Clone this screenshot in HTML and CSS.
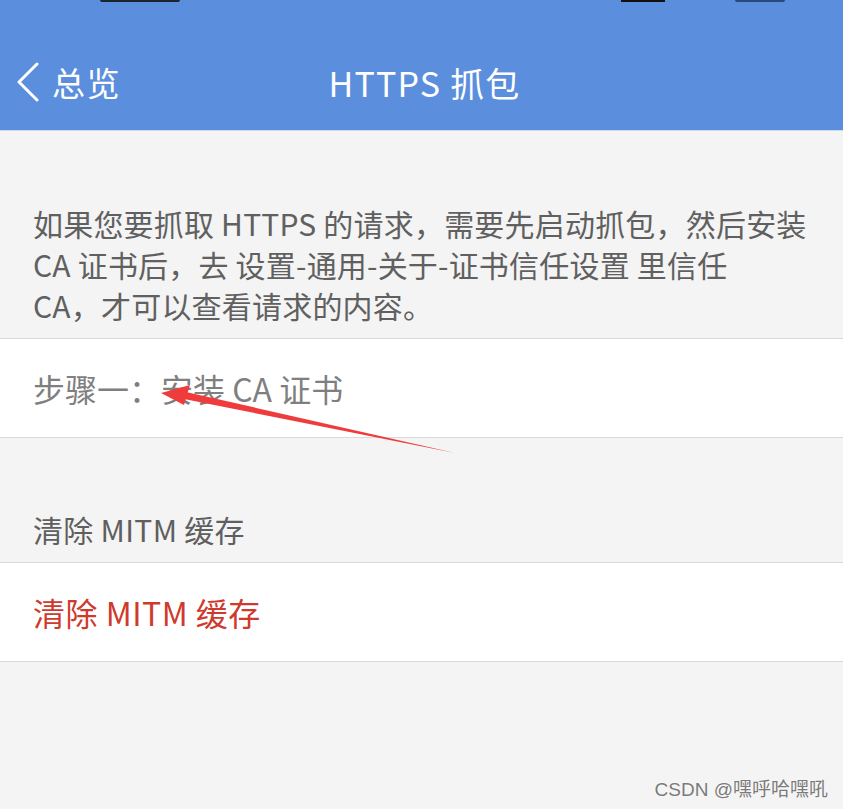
FILE: index.html
```html
<!DOCTYPE html>
<html lang="zh">
<head>
<meta charset="utf-8">
<title>HTTPS 抓包</title>
<link rel="stylesheet" href="styles.css">
</head>
<body>
<div class="screen">
  <header class="nav">
    <div class="status">
      <span class="time"></span>
      <span class="status-right">
        <span class="signal"></span>
        <span class="battery"></span>
      </span>
    </div>
    <div class="nav-row">
      <div class="back">
        <svg class="chev" width="24" height="40" viewBox="0 0 24 40"><polyline points="21,2 3,20 21,38" fill="none" stroke="#fff" stroke-width="3" stroke-linecap="round" stroke-linejoin="round"/></svg>
        <span>总览</span>
      </div>
      <div class="title">HTTPS 抓包</div>
      <div></div>
    </div>
  </header>

  <p class="intro">如果您要抓取 HTTPS 的请求，需要先启动抓包，然后安装<br>CA 证书后，去 设置-通用-关于-证书信任设置 里信任<br>CA，才可以查看请求的内容。</p>

  <div class="cell step">步骤一：安装 CA 证书</div>

  <div class="section-head">清除 MITM 缓存</div>
  <div class="cell danger">清除 MITM 缓存</div>

  <svg class="arrow" width="843" height="809" viewBox="0 0 843 809">
    <polygon points="455,453 186,392 184,399" fill="#ef3b3b"/>
    <polygon points="161,393 190,385 184,405" fill="#ef3b3b"/>
  </svg>

  <div class="watermark">CSDN @嘿呼哈嘿吼</div>
</div>
</body>
</html>
```
FILE: styles.css
```css
html, body {
  margin: 0;
  padding: 0;
}
body {
  background: #f4f4f4;
  font-family: "Noto Sans CJK SC", "Noto Sans", sans-serif;
}
.screen {
  position: relative;
  width: 843px;
  height: 809px;
  overflow: hidden;
  background: #f4f4f4;
}
.nav {
  height: 130px;
  background: #5b8edc;
  border-bottom: 1px solid #c9d9ee;
  box-sizing: content-box;
}
.status {
  height: 48px;
  display: flex;
  justify-content: space-between;
  align-items: flex-start;
  padding: 0 58px 0 100px;
}
.time {
  width: 80px;
  height: 2px;
  background: #1c2430;
  border-radius: 0 0 2px 2px;
}
.status-right {
  display: flex;
  gap: 70px;
}
.signal {
  width: 44px;
  height: 2px;
  background: #111;
}
.battery {
  width: 50px;
  height: 2px;
  background: #2a4a7a;
  border-radius: 0 0 3px 3px;
}
.nav-row {
  height: 68px;
  display: grid;
  grid-template-columns: 1fr auto 1fr;
  align-items: center;
  color: #fff;
}
.back {
  display: flex;
  align-items: center;
  gap: 12px;
  padding-left: 16px;
  font-size: 33px;
  letter-spacing: 1.5px;
}
.chev {
  display: block;
}
.title {
  font-size: 34px;
  letter-spacing: 1.2px;
  padding-left: 6px;
}
.intro {
  margin: 0;
  padding: 72px 33px 12px;
  font-size: 30px;
  line-height: 41px;
  letter-spacing: 0.2px;
  color: #606060;
  border-bottom: 1px solid #d9d9d9;
}
.cell {
  height: 98px;
  display: flex;
  align-items: center;
  padding: 0 33px;
  background: #fff;
  font-size: 32px;
  border-bottom: 1px solid #d9d9d9;
}
.step {
  color: #7f7f7f;
}
.section-head {
  padding: 71px 33px 12px;
  font-size: 30px;
  line-height: 41px;
  letter-spacing: 0.3px;
  color: #5f5f5f;
  border-bottom: 1px solid #d9d9d9;
}
.danger {
  color: #cf3a2e;
  letter-spacing: 0.5px;
}
.arrow {
  position: absolute;
  left: 0;
  top: 0;
  pointer-events: none;
}
.watermark {
  position: absolute;
  right: 15px;
  bottom: 8px;
  font-family: "Liberation Sans", "Noto Sans CJK SC", sans-serif;
  font-size: 19px;
  color: #7a7a7a;
  text-shadow: 0 0 2px #fff;
}
```
